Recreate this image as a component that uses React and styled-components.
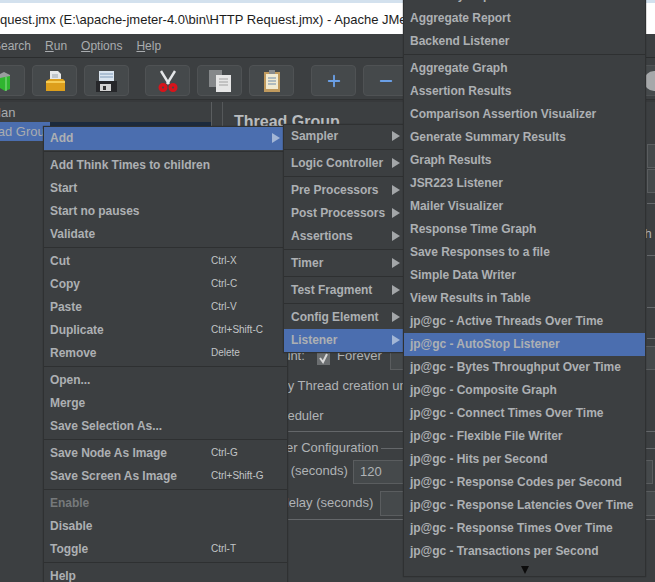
import styled, { createGlobalStyle } from 'styled-components';
import { Plus, Minus } from 'lucide-react';

const GlobalStyle = createGlobalStyle`
  html, body {
    margin: 0;
    padding: 0;
    background: #3c3f41;
  }
`;

const Screen = styled.div`
  position: relative;
  width: 655px;
  height: 582px;
  overflow: hidden;
  display: flex;
  flex-direction: column;
  background: #3c3f41;
  font-family: "Liberation Sans", Arial, sans-serif;
`;

const BrowserStrip = styled.div`
  height: 3px;
  background: #d3e1ee;
  flex-shrink: 0;
`;

const TitleBar = styled.div`
  height: 31px;
  flex-shrink: 0;
  background: #fff;
  color: #1c1c1c;
  font-size: 13px;
  line-height: 33px;
  white-space: nowrap;
  overflow: hidden;
`;

const MenuBar = styled.div`
  height: 24px;
  flex-shrink: 0;
  display: flex;
  gap: 14px;
  align-items: center;
  color: #a9acaf;
  font-size: 12px;
  border-bottom: 1px solid #2b2d2e;
  box-sizing: border-box;
  margin-left: -7px;
  span { text-decoration: underline; text-decoration-thickness: 1px; }
`;

const MenuLabel = styled.div`
  white-space: nowrap;
`;

const Toolbar = styled.div`
  height: 42px;
  flex-shrink: 0;
  display: flex;
  align-items: flex-start;
  padding-top: 7px;
  border-bottom: 1px solid #2f3132;
  box-sizing: border-box;
`;

const ToolButton = styled.div`
  width: 45px;
  height: 31px;
  margin-left: ${(props) => props.$gap || '7px'};
  flex-shrink: 0;
  box-sizing: border-box;
  background: #45494b;
  border: 1px solid #4f5254;
  border-radius: 4px;
  display: flex;
  align-items: center;
  justify-content: center;
  color: #6a9fe6;
`;

const Workspace = styled.div`
  flex: 1;
  display: flex;
  min-height: 0;
  border-top: 2px solid #37393b;
`;

const TreePane = styled.div`
  width: 212px;
  flex-shrink: 0;
  border-right: 1px solid #5b5e60;
  box-sizing: border-box;
  font-size: 13px;
  color: #a9acaf;
  padding-top: 1px;
`;

const TreeRow = styled.div`
  height: 19px;
  line-height: 19px;
  white-space: nowrap;
  width: ${(props) => (props.$selected ? '50px' : 'auto')};
  background: ${(props) => (props.$selected ? '#4b6eaf' : 'transparent')};
  overflow: hidden;
  text-indent: ${(props) => props.$indent};
`;

const TreeDark = styled.div`
  height: 5px;
  margin-top: -19px;
  margin-left: 50px;
  background: #1c2a3c;
`;

const FormPane = styled.div`
  flex: 1;
  margin-left: 10px;
  border-left: 1px solid #55585a;
  color: #b0b3b6;
  font-size: 13px;
  position: relative;
`;

const FormTitle = styled.div`
  font-size: 16px;
  font-weight: 700;
  color: #b9bcbf;
  margin: 11px 0 0 11px;
`;

/* bits of the form showing from under the menus */
const FormBit = styled.div`
  position: absolute;
  left: ${(props) => props.$x}px;
  top: ${(props) => props.$y}px;
  white-space: nowrap;
  line-height: 16px;
`;

const FormRule = styled.div`
  position: absolute;
  left: ${(props) => props.$x}px;
  top: ${(props) => props.$y}px;
  width: ${(props) => props.$w}px;
  height: 1px;
  background: #64676a;
`;

const FormInput = styled.div`
  position: absolute;
  left: ${(props) => props.$x}px;
  top: ${(props) => props.$y}px;
  width: ${(props) => props.$w}px;
  height: ${(props) => props.$h || 24}px;
  box-sizing: border-box;
  border: 1px solid #5a5d5f;
  background: #45494b;
  line-height: 22px;
  padding-left: 6px;
`;

const Check = styled.div`
  position: absolute;
  left: ${(props) => props.$x}px;
  top: ${(props) => props.$y}px;
  width: 13px;
  height: 13px;
  background: #6b6e70;
  display: flex;
  align-items: center;
  justify-content: center;
`;

const Popup = styled.div`
  position: absolute;
  left: ${(props) => props.$left}px;
  top: ${(props) => props.$top}px;
  width: ${(props) => props.$width}px;
  box-sizing: border-box;
  background: #3c3f41;
  border: 1px solid #2f3132;
  display: flex;
  flex-direction: column;
  box-shadow: 0 0 1px #2a2c2d;
`;

const Item = styled.div`
  height: 23px;
  flex-shrink: 0;
  display: flex;
  align-items: center;
  box-sizing: border-box;
  padding: 0 ${(props) => props.$end}px 2px ${(props) => props.$pad}px;
  font-size: 12px;
  font-weight: 700;
  letter-spacing: -0.04px;
  white-space: nowrap;
  color: ${(props) => (props.$disabled ? '#76797b' : '#adb0b3')};
  background: ${(props) => (props.$active ? '#4b6eaf' : 'transparent')};
`;

const ItemLabel = styled.span`
  flex: 1;
`;

const Shortcut = styled.span`
  position: absolute;
  left: 167px;
  font-size: 10px;
  font-weight: 400;
  letter-spacing: 0;
  color: #c2c5c7;
`;

const Arrow = styled.span`
  width: 0;
  height: 0;
  border-top: 5px solid transparent;
  border-bottom: 5px solid transparent;
  border-left: 8px solid ${(props) => (props.$active ? '#a3b6d6' : '#a3a6a8')};
`;

const Separator = styled.div`
  height: 4px;
  flex-shrink: 0;
  box-sizing: border-box;
  padding-top: 1px;
  &::before {
    content: '';
    display: block;
    height: 1px;
    background: #2e3031;
  }
`;

const MoreArrow = styled.div`
  height: 13px;
  display: flex;
  justify-content: center;
  align-items: center;
  &::before {
    content: '';
    width: 0;
    height: 0;
    border-left: 4px solid transparent;
    border-right: 4px solid transparent;
    border-top: 8px solid #0c0c0c;
  }
`;

const mainMenu = [
  { label: 'Add', arrow: true, active: true },
  '-',
  { label: 'Add Think Times to children' },
  { label: 'Start' },
  { label: 'Start no pauses' },
  { label: 'Validate' },
  '-',
  { label: 'Cut', key: 'Ctrl-X' },
  { label: 'Copy', key: 'Ctrl-C' },
  { label: 'Paste', key: 'Ctrl-V' },
  { label: 'Duplicate', key: 'Ctrl+Shift-C' },
  { label: 'Remove', key: 'Delete' },
  '-',
  { label: 'Open...' },
  { label: 'Merge' },
  { label: 'Save Selection As...' },
  '-',
  { label: 'Save Node As Image', key: 'Ctrl-G' },
  { label: 'Save Screen As Image', key: 'Ctrl+Shift-G' },
  '-',
  { label: 'Enable', disabled: true },
  { label: 'Disable' },
  { label: 'Toggle', key: 'Ctrl-T' },
  '-',
  { label: 'Help' },
];

const addMenu = [
  { label: 'Sampler', arrow: true },
  '-',
  { label: 'Logic Controller', arrow: true },
  '-',
  { label: 'Pre Processors', arrow: true },
  { label: 'Post Processors', arrow: true },
  { label: 'Assertions', arrow: true },
  '-',
  { label: 'Timer', arrow: true },
  '-',
  { label: 'Test Fragment', arrow: true },
  '-',
  { label: 'Config Element', arrow: true },
  { label: 'Listener', arrow: true, active: true },
];

const listenerMenu = [
  { label: 'Summary Report' },
  { label: 'Aggregate Report' },
  { label: 'Backend Listener' },
  '-',
  { label: 'Aggregate Graph' },
  { label: 'Assertion Results' },
  { label: 'Comparison Assertion Visualizer' },
  { label: 'Generate Summary Results' },
  { label: 'Graph Results' },
  { label: 'JSR223 Listener' },
  { label: 'Mailer Visualizer' },
  { label: 'Response Time Graph' },
  { label: 'Save Responses to a file' },
  { label: 'Simple Data Writer' },
  { label: 'View Results in Table' },
  { label: 'jp@gc - Active Threads Over Time' },
  { label: 'jp@gc - AutoStop Listener', active: true },
  { label: 'jp@gc - Bytes Throughput Over Time' },
  { label: 'jp@gc - Composite Graph' },
  { label: 'jp@gc - Connect Times Over Time' },
  { label: 'jp@gc - Flexible File Writer' },
  { label: 'jp@gc - Hits per Second' },
  { label: 'jp@gc - Response Codes per Second' },
  { label: 'jp@gc - Response Latencies Over Time' },
  { label: 'jp@gc - Response Times Over Time' },
  { label: 'jp@gc - Transactions per Second' },
];

function MenuItems({ items, pad, end = 3 }) {
  return items.map((item, i) =>
    item === '-' ? (
      <Separator key={i} />
    ) : (
      <Item key={i} $pad={pad} $end={end} $active={item.active} $disabled={item.disabled}>
        <ItemLabel>{item.label}</ItemLabel>
        {item.key && <Shortcut>{item.key}</Shortcut>}
        {item.arrow && <Arrow $active={item.active} />}
      </Item>
    )
  );
}

export default function App() {
  return (
    <Screen>
      <GlobalStyle />
      <BrowserStrip />
      <TitleBar>quest.jmx (E:\apache-jmeter-4.0\bin\HTTP Request.jmx) - Apache JMeter (4.0 r1823414)</TitleBar>
      <MenuBar>
        <MenuLabel>Search</MenuLabel>
        <MenuLabel><span>R</span>un</MenuLabel>
        <MenuLabel><span>O</span>ptions</MenuLabel>
        <MenuLabel><span>H</span>elp</MenuLabel>
      </MenuBar>
      <Toolbar>
        <ToolButton $gap="-20px">
          <svg width="26" height="22" viewBox="0 0 26 22">
            <path d="M8 5l6-3 6 3v6H8z" fill="#9a9d9f" />
            <path d="M10 8l10-2v13l-5 2-5-3z" fill="#2fb52f" />
            <path d="M16 7v14" stroke="#8fe08f" />
          </svg>
        </ToolButton>
        <ToolButton>
          <svg width="22" height="22" viewBox="0 0 22 22">
            <path d="M6 1h8l3 3v9H6z" fill="#e6e8ea" />
            <path d="M8 5h6M8 7h6" stroke="#9aa4ae" />
            <path d="M2 11l4-2h13l2 2v10H2z" fill="#dd9f1c" />
            <path d="M2 11h19v2H2z" fill="#f5cc55" />
          </svg>
        </ToolButton>
        <ToolButton>
          <svg width="21" height="22" viewBox="0 0 21 22">
            <path d="M0 11h3V1h15v10h3v11H0z" fill="#26272a" />
            <path d="M3 1h15v10H3z" fill="#d9e4ef" />
            <path d="M4 4h13M4 7h13" stroke="#7f9ab8" />
            <path d="M4 14h11v7H4z" fill="#d2d2d2" />
            <path d="M7 16h3v4H7z" fill="#333" />
          </svg>
        </ToolButton>
        <ToolButton $gap="16px">
          <svg width="20" height="22" viewBox="0 0 20 22">
            <path d="M3 1l8 13M17 1L9 14" stroke="#e4e6e8" strokeWidth="2.4" />
            <circle cx="5" cy="17.5" r="2.8" fill="none" stroke="#d8141b" strokeWidth="3.4" />
            <circle cx="15" cy="17.5" r="2.8" fill="none" stroke="#d8141b" strokeWidth="3.4" />
          </svg>
        </ToolButton>
        <ToolButton>
          <svg width="24" height="24" viewBox="0 0 24 24">
            <path d="M1 1h13v17H1z" fill="#85888a" />
            <path d="M8 6h15v17H8z" fill="#e6e6e6" />
            <path d="M11 10h9M11 13h9M11 16h9" stroke="#a0a0a0" />
          </svg>
        </ToolButton>
        <ToolButton>
          <svg width="18" height="23" viewBox="0 0 18 23">
            <path d="M1 3h16v20H1z" fill="#c09a5e" />
            <path d="M3 5h12v15H3z" fill="#f1ead2" />
            <path d="M5 9h8M5 12h8M5 15h8" stroke="#6f8bab" />
            <path d="M6 1h6v4H6z" fill="#8a8c8e" />
          </svg>
        </ToolButton>
        <ToolButton $gap="17px"><Plus size={18} strokeWidth={2.5} /></ToolButton>
        <ToolButton><Minus size={18} strokeWidth={2.5} /></ToolButton>
        <ToolButton $gap="223px">
          <svg width="22" height="22" viewBox="0 0 22 22">
            <circle cx="11" cy="11" r="10" fill="#a6a8aa" />
          </svg>
        </ToolButton>
      </Toolbar>
      <Workspace>
        <TreePane>
          <TreeRow $indent="-38px">Test Plan</TreeRow>
          <TreeRow $selected $indent="-29px">Thread Group</TreeRow>
          <TreeDark />
        </TreePane>
        <FormPane>
          <FormTitle>Thread Group</FormTitle>
          <FormInput $x={424} $y={42} $w={60} />
          <FormInput $x={424} $y={67} $w={60} />
          <FormRule $x={424} $y={101} $w={10} />
          <FormBit $x={402} $y={124}>Path</FormBit>
          <FormRule $x={424} $y={153} $w={10} />
          <FormRule $x={424} $y={205} $w={10} />
          <FormRule $x={424} $y={236} $w={10} />
          <FormBit $x={11} $y={246}>Loop Count:</FormBit>
          <Check $x={94} $y={250}>
            <svg width="11" height="11" viewBox="0 0 11 11"><path d="M2 5l3 4 4-8" stroke="#d8d8d8" strokeWidth="2" fill="none" /></svg>
          </Check>
          <FormBit $x={114} $y={246}>Forever</FormBit>
          <FormInput $x={167} $y={244} $w={300} />
          <FormBit $x={38} $y={276}>Delay Thread creation until needed</FormBit>
          <FormBit $x={42} $y={306}>Scheduler</FormBit>
          <FormRule $x={60} $y={329} $w={380} />
          <FormBit $x={16} $y={338}>Scheduler Configuration</FormBit>
          <FormRule $x={158} $y={346} $w={280} />
          <FormBit $x={15} $y={361}>Duration (seconds)</FormBit>
          <FormInput $x={130} $y={358} $w={300}>120</FormInput>
          <FormBit $x={13} $y={393}>Startup delay (seconds)</FormBit>
          <FormInput $x={157} $y={389} $w={280} $h={25} />
          <FormRule $x={60} $y={417} $w={380} />
        </FormPane>
      </Workspace>
      <Popup $left={43} $top={126} $width={245}>
        <MenuItems items={mainMenu} pad={6} end={7} />
      </Popup>
      <Popup $left={283} $top={124} $width={121}>
        <MenuItems items={addMenu} pad={7} />
      </Popup>
      <Popup $left={403} $top={-17} $width={243}>
        <MenuItems items={listenerMenu} pad={6} />
        <MoreArrow />
      </Popup>
    </Screen>
  );
}
